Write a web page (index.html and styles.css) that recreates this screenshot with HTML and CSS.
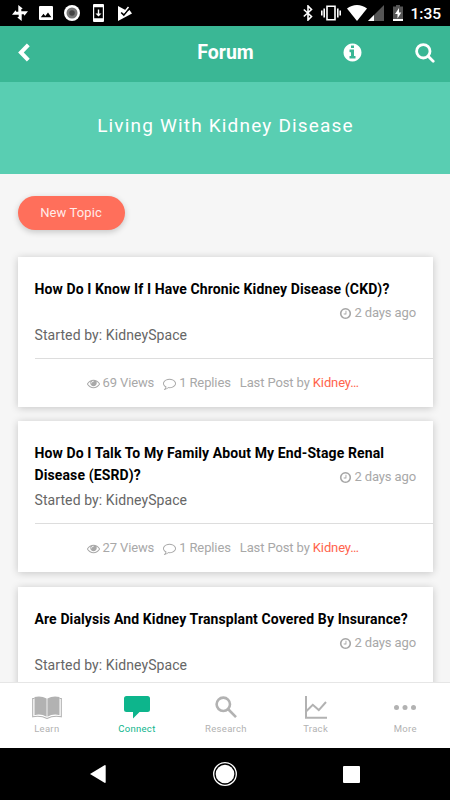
FILE: index.html
```html
<!DOCTYPE html>
<html lang="en">
<head>
<meta charset="utf-8">
<title>Forum</title>
<link rel="stylesheet" href="styles.css">
</head>
<body>
<svg class="defs" width="0" height="0" aria-hidden="true">
  <symbol id="eye" viewBox="0 0 1792 1792"><path d="M1664 960q-152-236-381-353 61 104 61 225 0 185-131.500 316.500t-316.500 131.500-316.500-131.500-131.500-316.500q0-121 61-225-229 117-381 353 133 205 333.500 326.500t434.500 121.500 434.500-121.500 333.500-326.500zm-720-384q0-20-14-34t-34-14q-125 0-214.500 89.500t-89.500 214.500q0 20 14 34t34 14 34-14 14-34q0-86 61-147t147-61q20 0 34-14t14-34zm848 384q0 34-20 69-140 230-376.500 368.500t-499.500 138.500-499.500-139-376.500-368q-20-35-20-69t20-69q140-229 376.500-368t499.500-139 499.500 139 376.500 368q20 35 20 69z"/></symbol>
  <symbol id="clock" viewBox="0 0 1792 1792"><path d="M1024 544v448q0 14-9 23t-23 9h-320q-14 0-23-9t-9-23v-64q0-14 9-23t23-9h224v-352q0-14 9-23t23-9h64q14 0 23 9t9 23zm416 352q0-148-73-273t-198-198-273-73-273 73-198 198-73 273 73 273 198 198 273 73 273-73 198-198 73-273zm224 0q0 209-103 385.500t-279.500 279.500-385.500 103-385.500-103-279.500-279.500-103-385.500 103-385.500 279.500-279.500 385.500-103 385.500 103 279.500 279.500 103 385.500z"/></symbol>
  <symbol id="comment" viewBox="0 0 1792 1792"><path d="M896 384q-204 0-381.500 69.500t-282 187.500-104.500 255q0 112 71.500 213.500t201.500 175.500l87 50-27 96q-24 91-70 172 152-63 275-171l43-38 57 6q69 8 130 8 204 0 381.500-69.500t282-187.500 104.500-255-104.500-255-282-187.500-381.500-69.500zm896 512q0 174-120 321.500t-326 233-450 85.500q-70 0-145-8-198 175-460 242-49 14-114 22h-5q-15 0-27-10.500t-16-27.500v-1q-3-4-.5-12t2-10 4.500-9.500l6-9 7-8.500 8-9q7-8 31-34.500t34.500-38 31-39.500 32.500-51 27-59 26-76q-157-89-247.500-220t-90.500-281q0-174 120-321.500t326-233 450-85.500 450 85.500 326 233 120 321.500z"/></symbol>
</svg>
<div class="screen">
  <div class="status">
    <svg class="s-pin" width="16" height="16" viewBox="0 0 16 16"><path d="M6.300 0 10.700 3.600 9.300 4.300V8H6.300zM16 6.300 12.400 10.700 11.700 9.300H8V6.300zM9.700 16 5.300 12.400l1.400-.7V8h3zM0 9.700 3.600 5.300l.7 1.400H8v3z"/></svg>
    <svg class="s-img" width="14" height="14" viewBox="0 0 14 14"><path fill-rule="evenodd" d="M1 0h12q1 0 1 1v12q0 1-1 1H1q-1 0-1-1V1q0-1 1-1zM1.800 11.300h10.600L9 6.600 6.300 10 4.500 7.800z"/></svg>
    <svg class="s-rec" width="16" height="16" viewBox="0 0 16 16"><circle cx="8" cy="8" r="8"/><circle cx="8" cy="8" r="5.500" fill="#777"/><circle cx="8" cy="8" r="2.800" fill="#444"/></svg>
    <svg class="s-dl" width="11" height="18" viewBox="0 0 11 18"><path fill-rule="evenodd" d="M1 0h9q1 0 1 1v16q0 1-1 1H1q-1 0-1-1V1q0-1 1-1zM1.200 3.200v11h8.600v-11z"/><path d="M4.800 5.500h1.400v4h2.300l-3 3-3-3h2.300z"/></svg>
    <svg class="s-play" width="14" height="15" viewBox="0 0 14 15"><path d="M0 0 6 3.300 9.500 5 11.500 4 14 7.500 0 15z"/><path d="m3.200 6.500 2.600 2.600L11.200 2.500" fill="none" stroke="#000" stroke-width="1.700"/><path d="m4 4.500 2 2L10.500 1" fill="none" stroke="#fff" stroke-width="1.500"/></svg>
    <svg class="s-bt" width="10" height="16" viewBox="0 0 10 16"><path d="m0.800 4.500 7.700 7L5 15V1l3.500 3.500-7.700 7" fill="none" stroke="#fff" stroke-width="1.600"/></svg>
    <svg class="s-vib" width="20" height="16" viewBox="0 0 20 16"><path d="M6 1.200h8v13.600H6zM3.200 3.500v9M16.800 3.500v9M.8 5.500v5M19.200 5.500v5" fill="none" stroke="#fff" stroke-width="1.600"/></svg>
    <svg class="s-wifi" width="20" height="16" viewBox="0 0 20 16"><path d="M0 3.500Q4.500 0 10 0t10 3.500L10 16z"/></svg>
    <svg class="s-cell" width="16" height="16" viewBox="0 0 16 16"><path d="M16 0v16H0z" fill="#555"/><path d="M6 10v6H0z"/></svg>
    <svg class="s-bat" width="10" height="16" viewBox="0 0 10 16"><path d="M0 1.500h3V0h4v1.500h3V16H0z" fill="#555"/><path d="M0 14h10v2H0zM6 3 2 9h2.500v4.500L8.300 7.500H6z"/></svg>
    <span class="s-time">1:35</span>
  </div>
  <header class="bar">
    <svg width="12" height="19" viewBox="0 0 12 19"><path d="m10.300 1.800-7.400 7.700 7.400 7.700" fill="none" stroke="#fff" stroke-width="4"/></svg>
    <h1>Forum</h1>
    <svg width="21" height="21" viewBox="0 0 1792 1792"><path d="M1152 1376v-160q0-14-9-23t-23-9h-96v-512q0-14-9-23t-23-9h-320q-14 0-23 9t-9 23v160q0 14 9 23t23 9h96v320h-96q-14 0-23 9t-9 23v160q0 14 9 23t23 9h448q14 0 23-9t9-23zm-128-896v-160q0-14-9-23t-23-9h-192q-14 0-23 9t-9 23v160q0 14 9 23t23 9h192q14 0 23-9t9-23zm640 416q0 209-103 385.500t-279.500 279.500-385.500 103-385.500-103-279.500-279.500-103-385.500 103-385.500 279.500-279.500 385.500-103 385.500 103 279.500 279.500 103 385.500z"/></svg>
    <svg width="20" height="20" viewBox="0 0 20 20"><g fill="none" stroke="#fff" stroke-width="2.800"><circle cx="8.300" cy="8.300" r="6.700"/><path d="m13.200 13.200 5 5" stroke-linecap="round"/></g></svg>
  </header>
  <div class="hero">Living With Kidney Disease</div>
  <main class="content">
    <button class="new">New Topic</button>
    <article class="card">
      <div class="head"><h2>How Do I Know If I Have Chronic Kidney Disease (CKD)?</h2><span class="ago"><svg class="ic"><use href="#clock"/></svg>2 days ago</span></div>
      <p class="by">Started by: KidneySpace</p>
      <div class="stats"><svg class="ic"><use href="#eye"/></svg><span class="views">69 Views</span><svg class="ic"><use href="#comment"/></svg><span class="replies">1 Replies</span><span>Last Post by <a>Kidney…</a></span></div>
    </article>
    <article class="card tall">
      <div class="head"><h2>How Do I Talk To My Family About My End-Stage Renal<br>Disease (ESRD)?</h2><span class="ago"><svg class="ic"><use href="#clock"/></svg>2 days ago</span></div>
      <p class="by">Started by: KidneySpace</p>
      <div class="stats"><svg class="ic"><use href="#eye"/></svg><span class="views">27 Views</span><svg class="ic"><use href="#comment"/></svg><span class="replies">1 Replies</span><span>Last Post by <a>Kidney…</a></span></div>
    </article>
    <article class="card">
      <div class="head"><h2>Are Dialysis And Kidney Transplant Covered By Insurance?</h2><span class="ago"><svg class="ic"><use href="#clock"/></svg>2 days ago</span></div>
      <p class="by">Started by: KidneySpace</p>
    </article>
  </main>
  <nav class="tabs">
    <div class="tab"><svg width="30" height="24" viewBox="0 0 30 24"><path d="M2.500 1Q9-.8 14.600 2.600v18.200Q9 17.500 2.500 19.200zM27.500 1Q21-.8 15.400 2.600v18.200q5.600-3.300 12.100-1.600z"/><path d="M2.500 2.500H.7v18.300q8-1.500 14.300 1.700 6.300-3.200 14.300-1.700V2.500h-1.800" fill="none" stroke="currentColor" stroke-width="1.100"/></svg><span>Learn</span></div>
    <div class="tab on"><svg width="26" height="24" viewBox="0 0 26 24"><path d="M2.500 0h21Q26 0 26 2.500v11q0 2.500-2.500 2.500h-8L9 22.500V16H2.500Q0 16 0 13.500v-11Q0 0 2.500 0z"/></svg><span>Connect</span></div>
    <div class="tab"><svg width="22" height="24" viewBox="0 0 22 24"><g fill="none" stroke="currentColor" stroke-width="2.600"><circle cx="8.300" cy="8.300" r="6.700"/><path d="m13 13 8 8.200"/></g></svg><span>Research</span></div>
    <div class="tab"><svg width="22" height="24" viewBox="0 0 22 24"><path d="M1 0v21.700h21M1 15.500l6.800-6.700 6 5.300L21 6" fill="none" stroke="currentColor" stroke-width="2"/></svg><span>Track</span></div>
    <div class="tab"><svg width="22" height="24" viewBox="0 0 22 24"><circle cx="2.500" cy="11.500" r="2.500"/><circle cx="11" cy="11.500" r="2.500"/><circle cx="19.500" cy="11.500" r="2.500"/></svg><span>More</span></div>
  </nav>
  <div class="softkeys">
    <svg width="16" height="18" viewBox="0 0 16 18"><path d="M0 9 14.500.2q1.200-.4 1.200.8v16q0 1.200-1.200.8z"/></svg>
    <svg width="24" height="24" viewBox="0 0 24 24"><circle cx="12" cy="12" r="11.300" fill="none" stroke="#fff" stroke-width="1.300"/><circle cx="12" cy="12" r="9.300"/></svg>
    <svg width="17" height="17" viewBox="0 0 17 17"><rect width="17" height="17" rx="1"/></svg>
  </div>
</div>
</body>
</html>
```

FILE: styles.css
```css
* { box-sizing: border-box; }
body, h1, h2, p { margin: 0; }
body { font-family: Roboto, "Liberation Sans", sans-serif; }
svg { display: block; flex: none; fill: currentColor; }
.defs { position: absolute; }
.screen { width: 450px; height: 800px; display: flex; flex-direction: column; overflow: hidden; background: #f6f6f6; }

.status { height: 26px; flex: none; display: flex; align-items: center; padding-left: 12px; background: #000; color: #fff; }
.s-img { margin-left: 11px; }
.s-rec { margin-left: 11px; }
.s-dl { margin-left: 13px; }
.s-play { margin-left: 14px; }
.s-bt { margin-left: 171px; }
.s-vib { margin-left: 8px; }
.s-wifi { margin-left: 6px; }
.s-cell { margin-left: 1px; }
.s-bat { margin-left: 9px; }
.s-time { margin-left: 7.500px; font-size: 15.5px; font-weight: 500; line-height: 26px; padding-top: 2px; }

.bar { height: 56px; flex: none; display: grid; grid-template-columns: 143px 165px 90px 52px; align-items: center; padding-bottom: 4px; background: #3ab795; color: #fff; }
.bar svg:first-child { margin-left: 18px; }
.bar h1 { font-size: 19.500px; font-weight: 700; line-height: 24px; text-align: center; margin-top: 1px; }
.bar svg:nth-of-type(2) { margin-left: 34px; margin-top: 1px; }
.bar svg:nth-of-type(3) { margin-left: 17px; margin-top: 2px; }

.hero { height: 92px; flex: none; display: flex; align-items: center; justify-content: center; padding: 0 0 5px 1px; background: #59ceb2; color: #fff; font-size: 19px; letter-spacing: 1.180px; }

.content { flex: 1; min-height: 0; overflow: hidden; padding: 22px 17px 0 17.500px; }
.new { display: block; width: 107px; height: 33.500px; margin: 0 0 27.500px; padding: 0; border: 0; border-radius: 17px; background: #ff6f5b; color: #ffece9; font: 400 13px/33px Roboto, sans-serif; letter-spacing: .1px; box-shadow: 0 2px 6px rgba(0,0,0,.2); }
.card { height: 150px; margin-bottom: 14px; padding: 21px 0 0 17px; background: #fff; box-shadow: 0 1px 8px rgba(0,0,0,.2); }
.card.tall { height: 151px; margin-bottom: 15px; }
.head { display: grid; height: 46px; padding-right: 17px; }
.head > * { grid-area: 1 / 1; }
.head h2 { font-size: 14px; font-weight: 700; line-height: 22px; letter-spacing: .11px; white-space: nowrap; color: #000; }
.ago { justify-self: end; align-self: start; margin-top: 25px; display: flex; align-items: center; font-size: 13px; letter-spacing: -.12px; line-height: 20px; color: #a8a8a8; }
.ic { width: 13px; height: 13px; margin-right: 2px; }
.by { font-size: 14px; line-height: 22px; letter-spacing: .09px; color: #666; }
.tall .by { padding-top: 1px; }
.stats { display: flex; align-items: center; margin-top: 12px; padding: 14px 0 0 52px; border-top: 1px solid #ddd; font-size: 13px; letter-spacing: -.12px; line-height: 20px; color: #a8a8a8; white-space: nowrap; }
.stats .ic { margin-right: 3px; }
.views, .replies { margin-right: 9px; }
.stats a { color: #ff634c; }

.tabs { height: 66px; flex: none; display: grid; grid-template-columns: repeat(5, 1fr); padding: 13px 0 0 2px; background: #fff; border-top: 1px solid #e6e6e6; color: #b2b2b2; }
.tab { display: flex; flex-direction: column; align-items: center; font-size: 9.500px; line-height: 14px; letter-spacing: .3px; }
.tab span { margin-top: 2px; }
.on { color: #0db58c; padding-left: 1px; }
.softkeys { height: 52px; flex: none; display: flex; align-items: center; padding-left: 90px; background: #000; color: #fff; }
.softkeys svg:nth-child(2) { margin-left: 107px; }
.softkeys svg:nth-child(3) { margin-left: 106px; }
```
